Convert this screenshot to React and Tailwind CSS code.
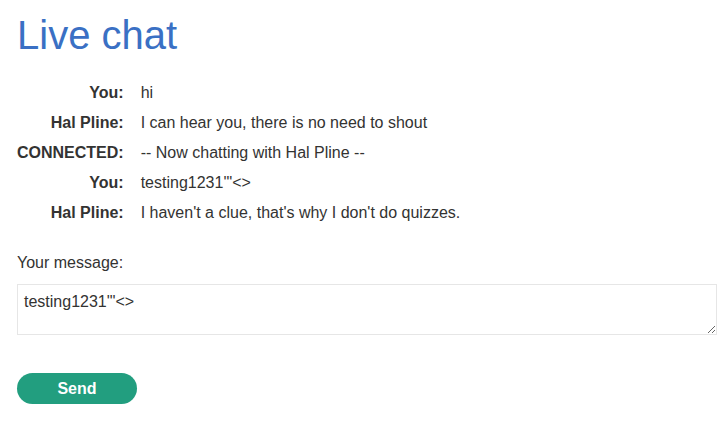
import React, { useState } from 'react';

const messages = [
  { who: 'You:', text: 'hi' },
  { who: 'Hal Pline:', text: 'I can hear you, there is no need to shout' },
  { who: 'CONNECTED:', text: '-- Now chatting with Hal Pline --' },
  { who: 'You:', text: `testing1231'"<>` },
  { who: 'Hal Pline:', text: "I haven't a clue, that's why I don't do quizzes." },
];

export default function App() {
  const [draft, setDraft] = useState(`testing1231'"<>`);

  return (
    <div className="min-h-screen bg-white pl-[17px] text-[#333332] text-[16px] font-['Liberation_Sans',Arial,sans-serif]">
      <h1 className="mt-[12px] text-[40px] leading-[47px] text-[#3a70c4]">Live chat</h1>

      {/* chat log */}
      <div className="mt-[19px] grid grid-cols-[auto_1fr] gap-x-[17px]">
        {messages.map((m, idx) => (
          <React.Fragment key={idx}>
            <div className="flex h-[30px] items-center justify-end font-bold">{m.who}</div>
            <div className="flex h-[30px] items-center">{m.text}</div>
          </React.Fragment>
        ))}
      </div>

      <form onSubmit={(e) => e.preventDefault()}>
        <label className="mt-[24px] block leading-[22px]">Your message:</label>
        <textarea
          value={draft}
          onChange={(e) => setDraft(e.target.value)}
          className="mt-[10px] block h-[51px] w-[700px] border border-[#e6e6e6] px-[6px] py-[6px] leading-[22px] text-[#333332] outline-none"
        />
        <button
          type="submit"
          className="mt-[38px] block h-[31px] w-[120px] rounded-full bg-[#229e7f] font-bold text-white"
        >
          Send
        </button>
      </form>
    </div>
  );
}
